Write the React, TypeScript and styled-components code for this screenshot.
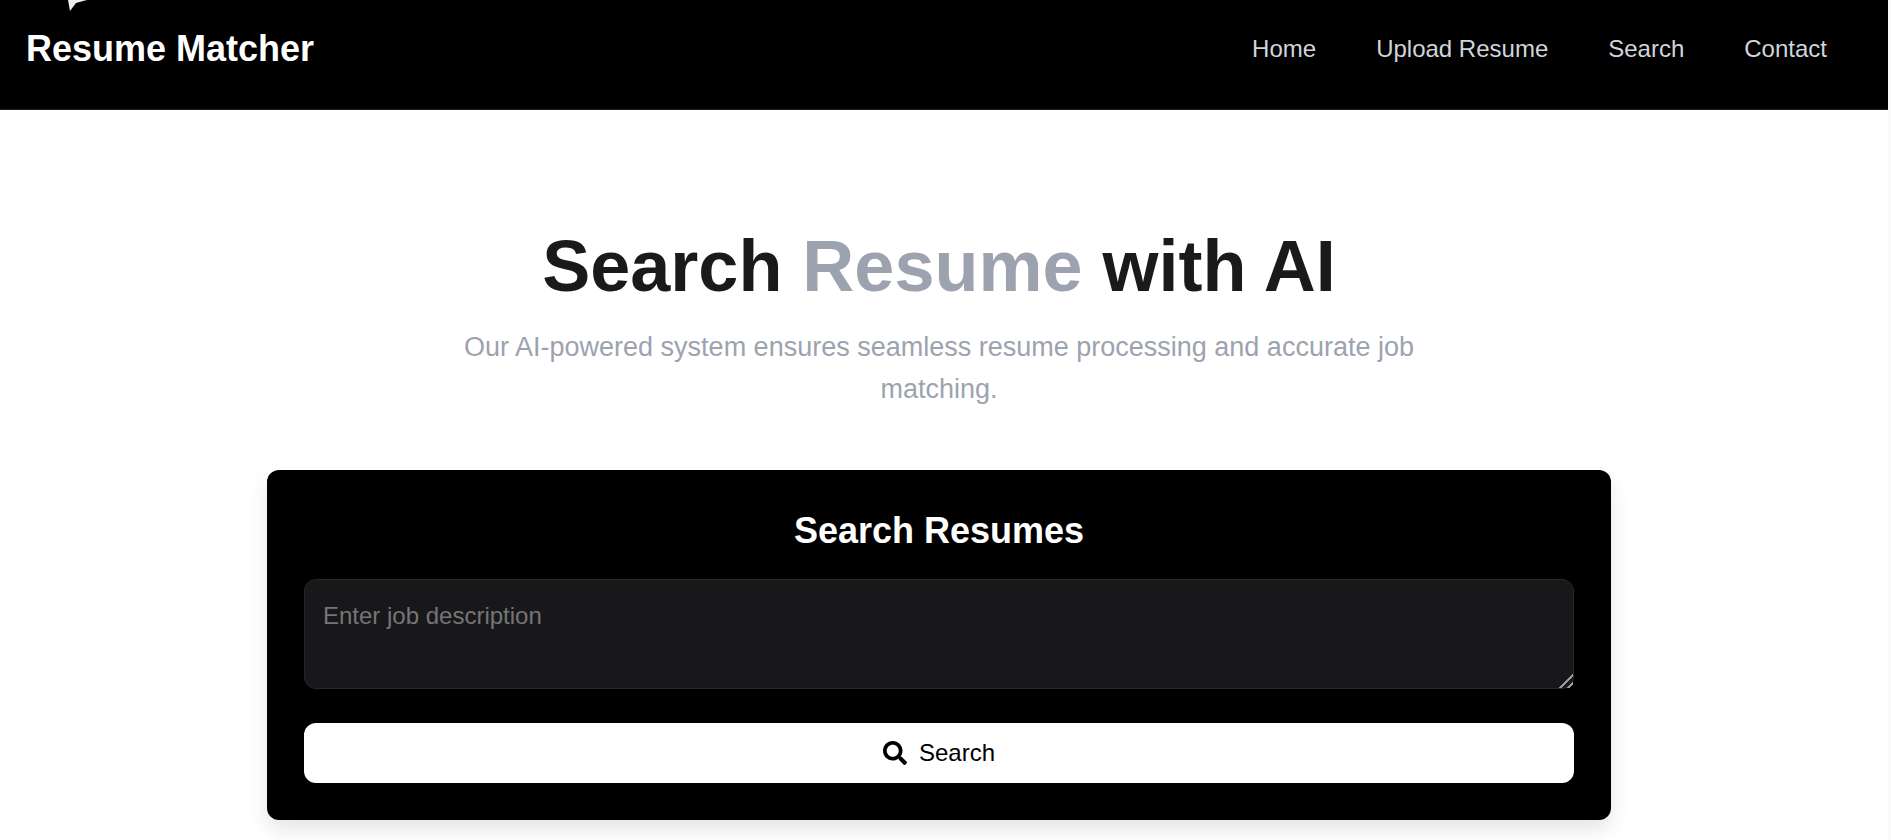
import React from 'react';
import styled, { createGlobalStyle } from 'styled-components';
import { FaSearch } from 'react-icons/fa';

const GlobalStyle = createGlobalStyle`
  * {
    box-sizing: border-box;
  }
  html, body {
    margin: 0;
    padding: 0;
    background: #fafafa;
    font-family: "Liberation Sans", Arial, sans-serif;
    overflow: hidden;
  }
`;

const Page = styled.div`
  width: 1888px;
  height: 840px;
  overflow: hidden;
  background: #fff;
`;

const Header = styled.header`
  height: 110px;
  background: #000;
  border-bottom: 1px solid #222;
  display: flex;
  align-items: center;
  justify-content: space-between;
  padding: 0 61px 12px 26px;
  position: relative;
`;

const Spark = styled.svg`
  position: absolute;
  left: 66px;
  top: 0;
  width: 22px;
  height: 12px;
`;

const Brand = styled.div`
  color: #fff;
  font-size: 36px;
  font-weight: 700;
`;

const Nav = styled.nav`
  display: flex;
  gap: 60px;
`;

const NavLink = styled.a`
  color: #d1d5db;
  font-size: 24px;
`;

const Main = styled.main`
  display: flex;
  flex-direction: column;
  align-items: center;
  padding: 112px 10px 0 0;
`;

const Title = styled.h1`
  margin: 0;
  color: #1a1a1a;
  font-size: 72px;
  font-weight: 700;
  line-height: 88px;
`;

const Accent = styled.span`
  color: #9ca3af;
`;

const Subtitle = styled.p`
  margin: 16px 0 0;
  width: 960px;
  text-align: center;
  color: #9ca3af;
  font-size: 27px;
  line-height: 42px;
`;

const Card = styled.section`
  margin-top: 60px;
  width: 1344px;
  height: 350px;
  background: #000;
  border-radius: 12px;
  padding: 37px;
  box-shadow: 0 10px 20px rgba(0, 0, 0, 0.1);
  display: flex;
  flex-direction: column;
`;

const CardTitle = styled.h2`
  margin: 0 0 24px;
  color: #fff;
  font-size: 36px;
  font-weight: 700;
  line-height: 48px;
  text-align: center;
`;

const JobInput = styled.textarea`
  width: 100%;
  height: 110px;
  padding: 22px 18px;
  background: #18181b;
  border: 1px solid #27272a;
  border-radius: 12px;
  color: #fff;
  font-family: inherit;
  font-size: 24px;
  outline: none;
  margin-bottom: 34px;
  display: block;

  &::placeholder {
    color: #757575;
  }

  &::-webkit-resizer {
    background: linear-gradient(
      135deg,
      transparent 0 52%,
      #9a9a9a 52% 62%,
      transparent 62% 78%,
      #9a9a9a 78% 88%,
      transparent 88%
    );
  }
`;

const SearchButton = styled.button`
  width: 100%;
  height: 60px;
  background: #fff;
  color: #000;
  border: none;
  border-radius: 12px;
  font-family: inherit;
  font-size: 24px;
  display: flex;
  align-items: center;
  justify-content: center;
  gap: 12px;
`;

export default function App() {
  return (
    <Page>
      <GlobalStyle />
      <Header>
        <Spark viewBox="0 0 22 12">
          <path d="M2 0 L4 11 L10 3 L21 0 Z" fill="#eee" />
        </Spark>
        <Brand>Resume Matcher</Brand>
        <Nav>
          <NavLink>Home</NavLink>
          <NavLink>Upload Resume</NavLink>
          <NavLink>Search</NavLink>
          <NavLink>Contact</NavLink>
        </Nav>
      </Header>
      <Main>
        <Title>
          Search <Accent>Resume</Accent> with AI
        </Title>
        <Subtitle>Our AI-powered system ensures seamless resume processing and accurate job matching.</Subtitle>
        <Card>
          <CardTitle>Search Resumes</CardTitle>
          <JobInput placeholder="Enter job description" />
          <SearchButton>
            <FaSearch size={24} />
            Search
          </SearchButton>
        </Card>
      </Main>
    </Page>
  );
}
